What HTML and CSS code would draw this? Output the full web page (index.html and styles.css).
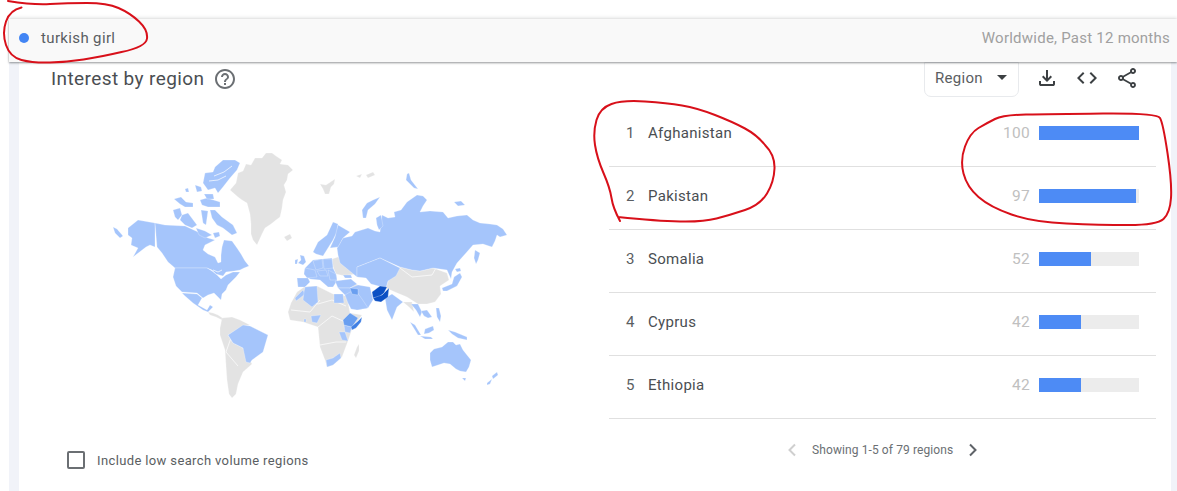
FILE: index.html
```html
<!DOCTYPE html>
<html lang="en">
<head>
<meta charset="utf-8">
<title>Interest by region</title>
<link rel="stylesheet" href="styles.css">
</head>
<body>
<div class="top-gap"></div>
<div class="shell">
  <header class="bar">
    <span class="term"><span class="dot"></span>turkish girl</span>
    <span class="scope">Worldwide, Past 12 months</span>
  </header>
  <div class="band">
    <main class="card">
      <div class="head">
        <h2 class="title">Interest by region</h2>
        <svg class="help" viewBox="0 0 24 24"><path d="M11 18h2v-2h-2v2zm1-16C6.48 2 2 6.48 2 12s4.48 10 10 10 10-4.48 10-10S17.52 2 12 2zm0 18c-4.41 0-8-3.59-8-8s3.59-8 8-8 8 3.59 8 8-3.59 8-8 8zm0-14c-2.21 0-4 1.79-4 4h2c0-1.1.9-2 2-2s2 .9 2 2c0 2-3 1.75-3 5h2c0-2.25 3-2.5 3-5 0-2.21-1.79-4-4-4z"/></svg>
        <div class="tools">
          <div class="select"><span>Region</span><span class="caret"></span></div>
          <svg class="tool" viewBox="0 0 24 24"><path d="M12 16l-5-5 1.4-1.45L11 12.15V4h2v8.15l2.6-2.6L17 11l-5 5zM6 20c-.55 0-1.02-.2-1.41-.59C4.2 19.02 4 18.55 4 18v-3h2v3h12v-3h2v3c0 .55-.2 1.02-.59 1.41-.39.39-.86.59-1.41.59H6z"/></svg>
          <svg class="tool" viewBox="0 0 24 24"><path d="M9.4 16.6L4.8 12l4.6-4.6L8 6l-6 6 6 6 1.4-1.4zm5.2 0l4.6-4.6-4.6-4.6L16 6l6 6-6 6-1.4-1.4z"/></svg>
          <svg class="tool" viewBox="0 0 24 24"><path d="M18 16.08c-.76 0-1.44.3-1.96.77L8.91 12.7c.05-.23.09-.46.09-.7s-.04-.47-.09-.7l7.05-4.11c.54.5 1.25.81 2.04.81 1.66 0 3-1.34 3-3s-1.34-3-3-3-3 1.34-3 3c0 .24.04.47.09.7L8.04 9.81C7.5 9.31 6.79 9 6 9c-1.66 0-3 1.34-3 3s1.34 3 3 3c.79 0 1.5-.31 2.04-.81l7.12 4.16c-.05.21-.08.43-.08.65 0 1.61 1.31 2.92 2.92 2.92 1.61 0 2.92-1.31 2.92-2.92s-1.31-2.92-2.92-2.92zM18 4c.55 0 1 .45 1 1s-.45 1-1 1-1-.45-1-1 .45-1 1-1zM6 13c-.55 0-1-.45-1-1s.45-1 1-1 1 .45 1 1-.45 1-1 1zm12 7.02c-.55 0-1-.45-1-1s.45-1 1-1 1 .45 1 1-.45 1-1 1z"/></svg>
        </div>
      </div>
      <div class="body">
        <section class="left">
          <svg class="map" viewBox="100 145 415 260" width="415" height="260">
            <g class="g">
              <!-- Greenland, Iceland, Arctic -->
              <polygon points="230,190 236,183 238,173 243,171 246,164 251,165 255,158 262,158 266,153 272,153 276,156 282,160 280,164 288,165 293,170 288,174 287,180 284,185 286,192 283,200 282,208 280,217 276,220 271,224 265,228 262,234 257,245 253,240 251,234 251,224 250,214 247,203 242,200 238,197"/>
              <polygon points="284,237 290,234 292,238 287,241"/>
              <polygon points="320,184 326,185 335,179 334,184 331,187 329,194 325,194 323,189"/>
              <polygon points="356,176 362,174 360,178"/>
              <polygon points="366,175 373,172 375,175 368,178"/>
              <!-- Central and South America -->
              <polygon points="208,312 213,313 218,315 224,319 222,320 216,317 210,315"/>
              <polygon points="222,318 232,317 240,320 250,325 243,326 228,335 233,343 243,348 252,364 243,372 238,384 236,394 232,398 229,394 227,380 226,366 225,350 220,335 220,328"/>
              <!-- Africa -->
              <polygon points="288,312 291,303 297,292 304,287 317,286 333,294 347,296 350,313 362,315 352,329 348,341 342,357 333,365 327,367 325,360 320,347 318,327 303,322 290,320"/>
              <polygon points="354,355 357,347 359,344 359,351 356,358"/>
              <!-- Ukraine & Belarus -->
              <polygon points="332,259 338,257 345,262 355,274 345,276 336,274 333,267"/>
              <!-- China & Mongolia -->
              <polygon points="388,281 400,267 412,270 420,271 433,268 447,273 449,280 440,286 441,294 435,302 427,304 418,304 407,297 395,292 386,288"/>
              <polygon points="349,286 356,284 360,286 356,288"/>
              <polygon points="403,302 412,302 414,312 409,307"/>
            </g>
            <g class="seam">
              <polyline points="400,268 412,277 432,275 436,268"/>
              <polyline points="304,300 318,304 332,300 346,306"/>
              <polyline points="318,327 332,316 345,322"/>
              <polyline points="320,345 336,342 346,342"/>
              <polyline points="291,310 310,312 320,300"/>
              <polyline points="232,335 226,352 238,366"/>
            </g>
            <g class="l">
              <!-- Alaska, Canada -->
              <polygon points="113,227 117,229 123,236 120,238 115,233"/>
              <polygon points="128,228 138,220 155,223 155,247 150,245 146,247 133,257 138,248 131,245 132,238 128,235"/>
              <polygon points="155,223 165,225 185,226 198,232 208,238 215,240 205,245 203,250 208,254 215,257 218,263 221,262 221,255 222,247 224,240 232,241 237,248 241,254 245,261 249,266 244,268 240,270 234,271 226,272 223,276 216,274 212,270 207,268 175,268 168,262 162,253 157,247"/>
              <!-- United States -->
              <polygon points="175,268 207,268 212,271 217,275 221,279 226,275 233,272 240,272 236,277 232,281 228,285 226,290 222,294 221,300 218,297 214,293 208,295 203,298 197,293 182,292 176,286 173,277"/>
              <polygon points="182,293 197,294 202,298 198,305 207,310 210,305 213,307 208,312 203,310 193,303 185,296"/>
              <!-- Arctic Canada -->
              <polygon points="240,163 235,160 223,160 215,167 213,172 205,173 203,183 208,190 215,188 218,193 223,187 230,178 237,170"/>
              <polygon points="174,199 181,197 186,202 193,203 193,207 185,207 180,204"/>
              <polygon points="185,189 188,188 189,192 186,192"/>
              <polygon points="195,185 201,187 202,191 197,192"/>
              <polygon points="200,200 207,198 220,202 220,207 208,207 202,205"/>
              <polygon points="204,194 213,194 214,199 207,199"/>
              <polygon points="173,210 180,208 182,215 178,220 175,217"/>
              <polygon points="182,215 188,213 197,225 192,228 185,225 180,220"/>
              <polygon points="201,210 208,211 206,225 203,223"/>
              <polygon points="210,210 215,210 222,217 233,225 237,233 232,235 223,228 217,225 212,218"/>
              <polygon points="213,233 219,232 220,236 215,238"/>
              <polygon points="196,228 205,231 212,235 205,238 199,235"/>
              <!-- Brazil -->
              <polygon points="228,335 243,325 250,326 268,335 263,352 252,360 250,363 246,362 243,348 233,343"/>
              <!-- Russia -->
              <polygon points="337,248 343,238 352,236 355,232 368,228 375,231 380,232 381,222 382,215 388,218 395,217 394,212 401,210 407,202 417,195 423,196 427,200 423,206 420,212 430,211 443,212 448,218 457,216 467,215 473,220 480,223 490,224 497,225 503,229 507,235 500,237 497,235 495,241 492,247 483,244 473,245 466,253 457,263 452,272 451,279 447,270 433,268 420,271 412,270 400,267 380,258 357,267 357,277 340,263 338,255"/>
              <!-- Kazakhstan and Central Asia -->
              <polygon points="357,267 380,258 400,268 396,276 388,281 386,288 371,284 366,278 357,277"/>
              <polygon points="363,218 362,210 367,203 373,200 380,197 375,204 368,210 366,218"/>
              <polygon points="376,218 381,215 383,226 379,230 377,225"/>
              <polygon points="407,174 409,173 411,180 418,189 414,188 406,180"/>
              <polygon points="454,202 461,201 465,205 458,206"/>
              <polygon points="475,250 480,253 478,260 476,264 474,258"/>
              <!-- Scandinavia -->
              <polygon points="313,252 318,242 327,235 333,222 338,224 337,232 333,240 328,248 323,256 316,254"/>
              <polygon points="338,225 350,232 343,238 338,247 330,248 335,237"/>
              <!-- Europe -->
              <polygon points="305,268 313,260 332,258 333,268 336,274 337,281 333,287 328,287 320,280 310,279 304,274"/>
              <polygon points="300,255 304,256 306,262 303,265 298,263 301,260"/>
              <polygon points="295,260 298,259 297,264 295,264"/>
              <polygon points="313,261 322,259 323,268 316,270"/>
              <polygon points="323,259 332,259 333,268 324,269"/>
              <polygon points="305,268 315,270 317,277 307,278 304,274"/>
              <polygon points="297,278 308,278 310,282 305,287 298,287"/>
              <polygon points="317,271 326,270 328,276 320,276"/>
              <polygon points="328,270 336,274 337,280 330,280"/>
              <polygon points="335,281 351,279 357,284 350,288 338,288"/>
              <polygon points="343,275 351,275 352,278 345,278"/>
              <!-- Middle East, Asia -->
              <polygon points="338,288 350,288 358,285 370,287 373,300 368,308 357,310 348,303 345,295"/>
              <polygon points="345,295 350,292 357,292 362,299 368,308 357,310 351,309 348,303"/>
              <polygon points="385,298 392,294 403,302 397,307 392,320 387,310"/>
              <polygon points="411,304 418,304 422,312 420,317 416,310"/>
              <polygon points="421,311 427,310 432,317 428,318 424,316"/>
              <polygon points="410,322 415,325 421,335 418,335"/>
              <polygon points="425,329 433,326 434,330 429,333 424,334"/>
              <polygon points="420,336 431,337 433,339 425,339"/>
              <polygon points="436,308 439,308 441,316 440,322 437,317"/>
              <polygon points="448,330 455,332 467,337 467,340 458,338 452,334"/>
              <polygon points="442,288 452,284 454,277 460,273 462,277 457,286 447,291 443,291"/>
              <polygon points="455,269 460,268 461,271 457,272"/>
              <!-- Africa highlights -->
              <polygon points="295,298 303,290 305,294 300,298 296,301"/>
              <polygon points="305,287 317,286 318,302 312,307 303,300 304,292"/>
              <polygon points="334,294 343,294 344,303 334,303"/>
              <polygon points="311,316 321,315 317,323 312,322"/>
              <polygon points="344,325 352,327 350,333 345,332"/>
              <polygon points="339,332 345,332 348,341 342,340"/>
              <polygon points="326,360 333,358 340,353 341,358 333,365 327,367"/>
              <polygon points="304,319 306,319 306,322 304,322"/>
              <!-- Oceania -->
              <polygon points="430,353 434,349 442,347 448,342 453,342 456,345 460,344 463,350 471,360 469,367 466,372 460,371 456,369 450,364 444,363 432,367 430,360"/>
              <polygon points="462,378 466,378 465,381"/>
              <polygon points="497,372 498,375 493,379 492,376"/>
              <polygon points="487,383 492,379 490,384 487,385"/>
            </g>
            <g class="slit">
              <polyline points="214,176 224,172 232,166"/>
              <polyline points="209,181 218,180 226,176"/>
              <polyline points="213,270 218,272 222,270"/>
            </g>
            <g class="m">
              <polygon points="350,288 358,289 358,295 352,294"/>
              <polygon points="343,320 350,313 358,318 352,327 344,325"/>
            </g>
            <g class="x">
              <polygon points="362,317 361,322 356,328 352,330 351,327 357,322"/>
            </g>
            <g class="d">
              <polygon points="372,292 380,286 387,287 384,293 379,297 373,298"/>
              <polygon points="373,298 382,295 389,288 388,297 381,302 375,301"/>
            </g>
          </svg>
          <label class="check"><span class="box"></span>Include low search volume regions</label>
        </section>
        <section class="right">
          <div class="row"><span class="rank">1</span><span class="name">Afghanistan</span><span class="val">100</span><span class="track"><span class="fill" style="width:100%"></span></span></div>
          <div class="row"><span class="rank">2</span><span class="name">Pakistan</span><span class="val">97</span><span class="track"><span class="fill" style="width:97%"></span></span></div>
          <div class="row"><span class="rank">3</span><span class="name">Somalia</span><span class="val">52</span><span class="track"><span class="fill" style="width:52%"></span></span></div>
          <div class="row"><span class="rank">4</span><span class="name">Cyprus</span><span class="val">42</span><span class="track"><span class="fill" style="width:42%"></span></span></div>
          <div class="row"><span class="rank">5</span><span class="name">Ethiopia</span><span class="val">42</span><span class="track"><span class="fill" style="width:42%"></span></span></div>
          <div class="pager">
            <svg class="chev off" viewBox="0 0 10 14"><polyline points="8,1.5 2.5,7 8,12.5"/></svg>
            <span>Showing 1-5 of 79 regions</span>
            <svg class="chev" viewBox="0 0 10 14"><polyline points="2,1.5 7.5,7 2,12.5"/></svg>
          </div>
        </section>
      </div>
    </main>
  </div>
</div>
<svg class="ink" viewBox="0 0 1177 491">
  <path d="M21.5 7.5Q10 10 6 21.5Q2 33 6 45Q10 57 21.5 60Q33 63 50 62.5Q67 62 83.5 59.5Q100 57 121.5 52Q146 47 147 38.5Q148 30 139 21.5Q130 13 118.5 8Q107 3 87 3Q67 3 50 4Q33 5 8 1"/>
  <path d="M620 221Q613 208 611.5 198Q610 188 603.5 173Q597 158 595 145Q593 132 596.5 120Q600 108 611.5 104Q623 100 645 101.5Q667 103 682 105.5Q697 108 715 115Q733 122 745 128.5Q757 135 765 145Q775 155 774.5 168.5Q774 182 767 193.5Q760 205 745 210Q730 215 716.5 218.5Q703 222 680 221.5Q657 221 618 217"/>
  <path d="M995 119Q1003 115 1026 114.5Q1050 114 1103 113.5Q1157 113 1160 118Q1163 123 1167.5 153Q1172 183 1171 198Q1170 213 1163.5 219Q1157 225 1128.5 225Q1100 225 1066.5 223.5Q1033 222 1011.5 214.5Q990 207 978.5 197Q967 187 963.5 173.5Q960 160 965 146.5Q970 133 978.5 128Q987 123 995 119Z"/>
</svg>
</body>
</html>
```
FILE: styles.css
```css
* { box-sizing: border-box; }
html, body { margin: 0; height: 491px; overflow: hidden; background: #fff; }
body { font-family: Roboto, "Liberation Sans", sans-serif; color: #3c4043; }
.top-gap { height: 19px; }
.shell { margin-left: 9px; height: 472px; display: flex; flex-direction: column; }
.bar {
  height: 43px; flex: none; display: flex; align-items: center; justify-content: space-between;
  padding: 0 7px 5px 10px; background: #f9f9f9; position: relative; z-index: 1;
  box-shadow: 0 1px 2px rgba(60,64,67,.55), 0 -2px 3px rgba(60,64,67,.1);
}
.term { display: flex; align-items: center; font-size: 15px; letter-spacing: .36px; color: #5a5e62; }
.dot { width: 10px; height: 10px; border-radius: 50%; background: #4285f4; margin-right: 12px; }
.scope { font-size: 15px; letter-spacing: .24px; color: #a0a0a0; }
.band { flex: 1; background: #f1f3f9; padding: 0 6px 0 10px; }
.card { height: 100%; background: #fff; }
.head { height: 42px; display: flex; padding: 0 32px; }
.title { margin: 7px 0 0; font-size: 19px; line-height: 20px; font-weight: 400; letter-spacing: .4px; color: #4a4e52; }
.help { width: 24px; height: 24px; margin: 5px 0 0 9px; fill: #6b6f73; }
.tools { margin-left: auto; display: flex; gap: 16px; align-items: flex-start; }
.select {
  width: 95px; height: 35px; padding: 0 11px 4px 10px; display: flex; align-items: center; justify-content: space-between;
  border: 1px solid #e8eaed; border-radius: 0 0 7px 7px; font-size: 15px; letter-spacing: .3px; color: #5a5e62;
}
.caret { border-left: 5px solid transparent; border-right: 5px solid transparent; border-top: 5px solid #3c4043; }
.tool { width: 24px; height: 24px; margin-top: 4px; fill: #3c4043; }
.body { display: flex; }
.left { width: 590px; flex: none; padding: 41px 0 0 81px; }
.map { display: block; filter: blur(.35px); }
.map polygon { stroke: #fff; stroke-width: .25; stroke-linejoin: round; }
.g polygon { fill: #e3e3e3; }
.l polygon { fill: #a5c5fb; }
.m polygon { fill: #6a9ff0; }
.x polygon { fill: #3f7fe3; }
.d polygon { fill: #0c50c4; }
.seam polyline, .slit polyline { fill: none; stroke: #fff; stroke-width: .7; }
.check { display: flex; align-items: center; margin: 46px 0 0 -33px; font-size: 13px; letter-spacing: .37px; color: #5a5e62; }
.box { width: 18px; height: 18px; border: 2px solid #6b6f73; border-radius: 2px; margin-right: 12px; }
.right { width: 547px; flex: none; }
.row {
  height: 63px; padding: 0 17px 4px 18px; display: flex; align-items: center;
  border-bottom: 1px solid #e0e0e0; font-size: 15px;
}
.rank { width: 21px; margin-left: -1px; margin-right: 1px; color: #5a5e62; }
.name { flex: 1; letter-spacing: .3px; color: #4a4e52; }
.val { margin-right: 9px; color: #c0c0c0; font-size: 15.5px; letter-spacing: .3px; }
.track { width: 100px; height: 14px; background: #ececec; display: block; }
.fill { display: block; height: 100%; background: #4d8bf5; }
.pager { display: flex; align-items: center; padding: 24px 0 0 178px; font-size: 12px; letter-spacing: .1px; color: #6b6f73; }
.chev { width: 10px; height: 14px; fill: none; stroke: #5f6368; stroke-width: 2; }
.chev.off { stroke: #cfcfcf; margin-right: 15px; }
.pager span + .chev { margin-left: 15px; }
.ink { position: absolute; left: 0; top: 0; width: 1177px; height: 491px; z-index: 2; fill: none; stroke: #d8101a; stroke-width: 2; stroke-linejoin: round; stroke-linecap: round; pointer-events: none; }
```
